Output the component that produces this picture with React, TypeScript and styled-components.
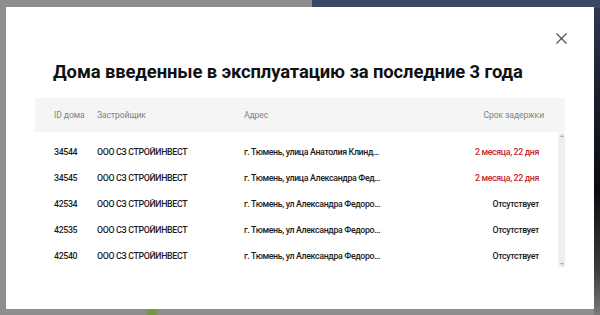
import React from "react";
import styled, { createGlobalStyle } from "styled-components";

const Global = createGlobalStyle`
  html, body { margin: 0; padding: 0; }
  body {
    width: 600px;
    height: 315px;
    overflow: hidden;
    background-color: #8d8d8d;
    background-image:
      linear-gradient(to right, transparent 0 312px, #3c4868 312px 600px),
      linear-gradient(to bottom, #2f3a58 0%, #1b1f2c 30%, #0c0c10 60%, #3a3a3a 85%, #7a7a7a 100%),
      radial-gradient(circle at 152px 313px, #6f9a3a 0 4px, transparent 6px);
    background-size: 600px 8px, 6px 315px, 600px 315px;
    background-position: 0 0, 594px 0, 0 0;
    background-repeat: no-repeat;
    font-family: Roboto, "Liberation Sans", sans-serif;
  }
`;

const Page = styled.div`
  padding: 7px 6px 6px 6px;
`;

const Modal = styled.div`
  position: relative;
  box-sizing: border-box;
  width: 588px;
  height: 302px;
  background: #ffffff;
  padding: 53px 29px 0 29px;
`;

const Close = styled.button`
  position: absolute;
  top: 24px;
  right: 26px;
  width: 14px;
  height: 14px;
  padding: 0;
  border: 0;
  background: none;
  display: flex;
  align-items: center;
  justify-content: center;
`;

const Title = styled.h1`
  margin: 0 0 0 18px;
  font-family: Roboto, "Liberation Sans", sans-serif;
  font-weight: 700;
  font-size: 18.4px;
  line-height: 24px;
  color: #111;
  white-space: nowrap;
  letter-spacing: -0.1px;
`;

const Table = styled.div`
  margin-top: 14px;
  display: flex;
  flex-direction: column;
`;

const Cols = `
  display: grid;
  grid-template-columns: 43px 147px 1fr 120px;
  align-items: center;
  padding-left: 19px;
`;

const HeadRow = styled.div`
  ${Cols}
  height: 34px;
  padding-right: 21px;
  background: #f5f5f5;
  font-size: 8.6px;
  letter-spacing: -0.1px;
  color: #828282;
`;

const Body = styled.div`
  display: flex;
  height: 135px;
`;

const Rows = styled.div`
  flex: 1;
  padding-top: 7px;
`;

const Track = styled.div`
  width: 7px;
  margin-top: 1px;
  background: #efefef;
  display: flex;
  flex-direction: column;
  justify-content: space-between;
  align-items: center;
  padding: 2px 0;
  box-sizing: border-box;
`;

const Arrow = styled.span<{ $down?: boolean }>`
  width: 0;
  height: 0;
  border-left: 2px solid transparent;
  border-right: 2px solid transparent;
  ${(p) => (p.$down ? "border-top: 2px solid #a8a8a8;" : "border-bottom: 2px solid #a8a8a8;")}
`;

const Row = styled.div`
  ${Cols}
  height: 26px;
  padding-right: 19px;
  font-size: 8.8px;
  letter-spacing: -0.35px;
  font-weight: 500;
  color: #1c1c1c;
`;

const Cell = styled.div<{ $right?: boolean; $red?: boolean }>`
  white-space: nowrap;
  overflow: hidden;
  text-overflow: ellipsis;
  text-align: ${(p) => (p.$right ? "right" : "left")};
  color: ${(p) => (p.$red ? "#c4282e" : "inherit")};
`;

const Addr = styled(Cell)`
  max-width: 137px;
`;

const rows = [
  { id: "34544", dev: "ООО СЗ СТРОЙИНВЕСТ", addr: "г. Тюмень, улица Анатолия Клиндюка, 12", delay: "2 месяца, 22 дня", red: true },
  { id: "34545", dev: "ООО СЗ СТРОЙИНВЕСТ", addr: "г. Тюмень, улица Александра Федоровича, 5", delay: "2 месяца, 22 дня", red: true },
  { id: "42534", dev: "ООО СЗ СТРОЙИНВЕСТ", addr: "г. Тюмень, ул Александра Федоровича, 7", delay: "Отсутствует", red: false },
  { id: "42535", dev: "ООО СЗ СТРОЙИНВЕСТ", addr: "г. Тюмень, ул Александра Федоровича, 9", delay: "Отсутствует", red: false },
  { id: "42540", dev: "ООО СЗ СТРОЙИНВЕСТ", addr: "г. Тюмень, ул Александра Федоровича, 11", delay: "Отсутствует", red: false },
];

export default function App() {
  return (
    <>
      <Global />
      <Page>
        <Modal>
          <Close aria-label="Закрыть">
            <svg width="11" height="11" viewBox="0 0 11 11">
              <path d="M0.5 0.5 L10.5 10.5 M10.5 0.5 L0.5 10.5" stroke="#555" strokeWidth="1.3" />
            </svg>
          </Close>
          <Title>Дома введенные в эксплуатацию за последние 3 года</Title>
          <Table>
            <HeadRow>
              <Cell>ID дома</Cell>
              <Cell>Застройщик</Cell>
              <Cell>Адрес</Cell>
              <Cell $right>Срок задержки</Cell>
            </HeadRow>
            <Body>
              <Rows>
                {rows.map((r) => (
                  <Row key={r.id}>
                    <Cell>{r.id}</Cell>
                    <Cell>{r.dev}</Cell>
                    <Addr>{r.addr}</Addr>
                    <Cell $right $red={r.red}>{r.delay}</Cell>
                  </Row>
                ))}
              </Rows>
              <Track>
                <Arrow />
                <Arrow $down />
              </Track>
            </Body>
          </Table>
        </Modal>
      </Page>
    </>
  );
}
